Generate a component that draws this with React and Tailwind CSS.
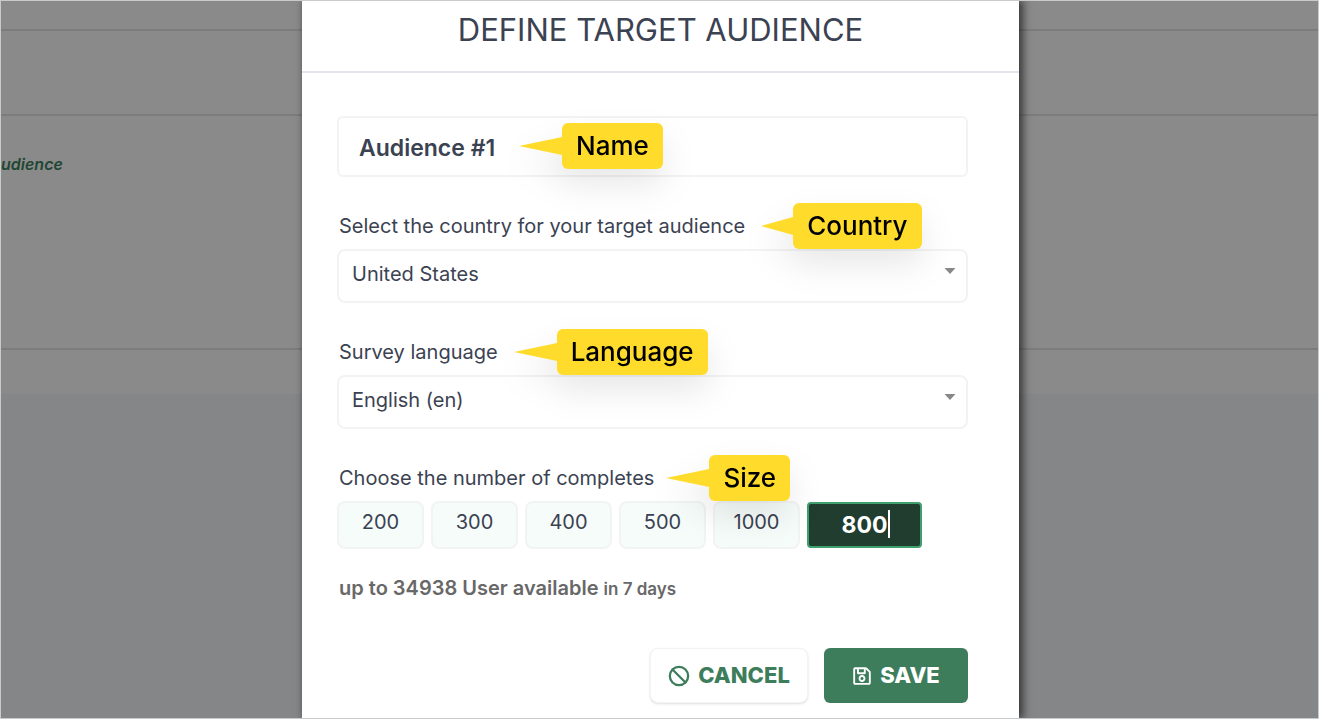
import React from "react";
import { Ban } from "lucide-react";
import { FaRegSave } from "react-icons/fa";

const sizes = [200, 300, 400, 500, 1000];

function Callout({ children, short }) {
  return (
    <span className="relative z-10 flex h-[46px] items-center drop-shadow-[0_16px_16px_rgba(0,0,0,0.09)]">
      <svg
        className={short ? "h-5 w-8" : "h-5 w-[43px]"}
        viewBox="0 0 43 20"
        preserveAspectRatio="none"
        aria-hidden="true"
      >
        <path d="M0 10 C14 7 29 4 43 1 V19 C29 16 14 13 0 10Z" fill="#ffdc2b" />
      </svg>
      <span className="flex h-[46px] items-center rounded-md bg-[#ffdc2b] px-3.5 text-[26px] font-medium leading-none text-black">
        {children}
      </span>
    </span>
  );
}

function SelectField({ id, label, value, short }) {
  return (
    <div className="mt-[34px]">
      <div className="flex h-[30px] items-center gap-4">
        <label htmlFor={id} className="pl-0.5 text-xl">
          {label}
        </label>
        <Callout short={short}>{value.callout}</Callout>
      </div>
      <div className="relative mt-2">
        <select
          id={id}
          className="block h-[54px] w-full appearance-none rounded-lg border-2 border-[#f3f3f3] bg-white pb-1 pl-[13px] text-xl outline-none"
        >
          <option>{value.text}</option>
        </select>
        <svg
          className="pointer-events-none absolute right-3 top-[19px] h-1.5 w-3"
          viewBox="0 0 12 6"
          aria-hidden="true"
        >
          <path d="M0.500 0H11.500L6 6Z" fill="#888" />
        </svg>
      </div>
    </div>
  );
}

export default function App() {
  return (
    <div className="relative flex min-h-screen flex-col overflow-hidden border border-[#c8cbcb] bg-[#858688] font-['Inter',sans-serif] text-[#3b4252]">
      <div className="h-[30px] border-b-2 border-[#7c7c7c] bg-[#8a8a8a]" />
      <div className="h-[85px] border-b-2 border-[#7c7c7c] bg-[#8a8a8a]" />
      <div className="h-[234px] border-b-2 border-[#7c7c7c] bg-[#8a8a8a] pt-9">
        <span className="block text-base font-semibold italic text-[#1f4733]">udience</span>
      </div>
      <div className="h-11 bg-[#8a8a8a]" />

      <div className="absolute inset-0 flex justify-center pl-0.5">
        <main
          role="dialog"
          aria-labelledby="dialog-title"
          className="w-[717px] max-w-full bg-white shadow-[3px_0_8px_1px_rgba(0,0,0,0.6)]"
        >
          <header className="border-b-2 border-[#e1e4ea] pb-3">
            <h1
              id="dialog-title"
              className="text-center text-[31px] font-normal leading-[58px]"
            >
              DEFINE TARGET AUDIENCE
            </h1>
          </header>

          <form className="pl-[35px] pr-[51px] pt-[43px]" onSubmit={(e) => e.preventDefault()}>
            <div className="relative">
              <input
                aria-label="Audience name"
                defaultValue="Audience #1"
                className="block h-[61px] w-full rounded-md border-2 border-[#f3f3f3] bg-white pl-5 pt-0.5 text-[23px] font-semibold outline-none"
              />
              <div className="pointer-events-none absolute left-[182px] top-[7px]">
                <Callout>Name</Callout>
              </div>
            </div>

            <SelectField
              id="country"
              label="Select the country for your target audience"
              value={{ text: "United States", callout: "Country" }}
              short
            />
            <SelectField
              id="language"
              label="Survey language"
              value={{ text: "English (en)", callout: "Language" }}
            />

            <div className="mt-[34px] flex h-[30px] items-center gap-3">
              <label htmlFor="size" className="pl-0.5 text-xl">
                Choose the number of completes
              </label>
              <Callout>Size</Callout>
            </div>
            <div className="mt-2 flex items-center gap-[7px]">
              {sizes.map((n) => (
                <button
                  key={n}
                  type="button"
                  className="h-12 w-[87px] rounded-lg border-2 border-[#f2f3f3] bg-[#f6fcfa] pb-1.5 text-xl"
                >
                  {n}
                </button>
              ))}
              <div className="relative">
                <input
                  id="size"
                  defaultValue="800"
                  className="block h-[46px] w-[115px] rounded border-2 border-[#3f9f6d] bg-[#213d30] text-center text-[23px] font-bold text-white outline-none"
                />
                <span className="absolute left-[81px] top-2 h-7 w-0.5 bg-white" />
              </div>
            </div>

            <p className="mt-6 pl-0.5 text-xl font-semibold leading-[30px] text-[#686868]">
              up to 34938 User available <span className="text-[17px]">in 7 days</span>
            </p>

            <div className="mt-11 flex justify-end gap-4">
              <button
                type="button"
                className="flex h-[55px] w-[158px] items-center justify-center gap-2 rounded-lg border border-[#f3f3f3] bg-white text-[22px] font-extrabold text-[#3d7d5c] shadow-sm"
              >
                <Ban size={22} strokeWidth={2.5} />
                CANCEL
              </button>
              <button
                type="submit"
                className="flex h-[55px] w-36 items-center justify-center gap-2 rounded-md bg-[#3d7d5c] text-[22px] font-extrabold text-white"
              >
                <FaRegSave size={20} />
                SAVE
              </button>
            </div>
          </form>
        </main>
      </div>
    </div>
  );
}
